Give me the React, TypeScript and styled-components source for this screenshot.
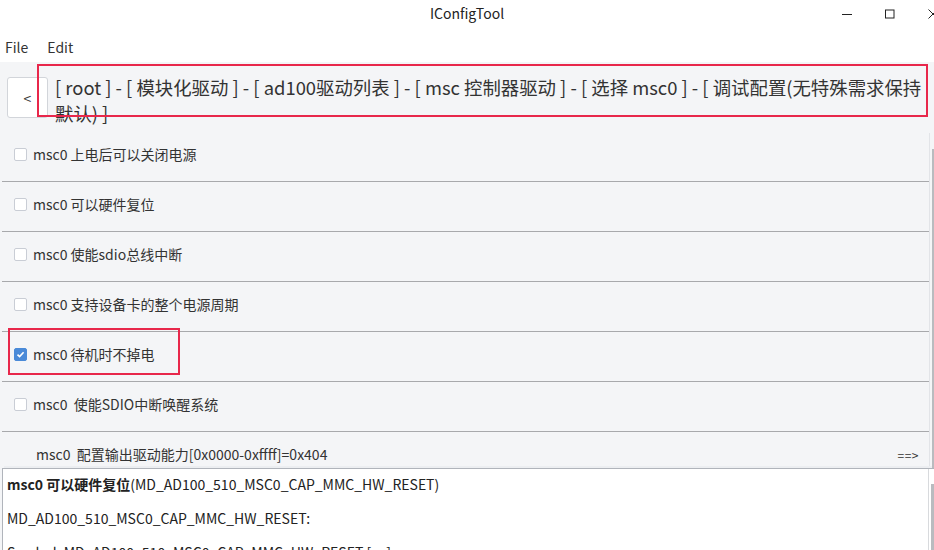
import styled, { createGlobalStyle } from "styled-components";

const GlobalStyle = createGlobalStyle`
	html, body {
		margin: 0;
		padding: 0;
		overflow: hidden;
		background: #ffffff;
	}
	body {
		font-family: "Noto Sans CJK SC", "Noto Sans", sans-serif;
		color: #2b2b2b;
	}
`;

const Window = styled.div`
	position: relative;
	width: 934px;
	height: 550px;
	overflow: hidden;
	display: flex;
	flex-direction: column;
	background: #f4f5f7;
`;

const TitleBar = styled.div`
	height: 30px;
	flex: none;
	display: grid;
	grid-template-columns: 1fr auto 1fr;
	align-items: center;
	background: #ffffff;
`;

const Title = styled.div`
	grid-column: 2;
	font-size: 14px;
	color: #222;
	padding-bottom: 4px;
`;

const Controls = styled.div`
	grid-column: 3;
	justify-self: end;
	display: flex;
	align-items: center;
	gap: 33px;
	margin-right: -4px;
	padding-bottom: 3px;
	color: #222;
`;

const ControlIcon = styled.svg`
	width: 10px;
	height: 10px;
	display: block;
`;

const MenuBar = styled.div`
	height: 32px;
	flex: none;
	display: flex;
	align-items: center;
	gap: 19px;
	padding: 2px 0 0 5px;
	box-sizing: border-box;
	background: #ffffff;
`;

const MenuItem = styled.span`
	font-size: 14px;
	color: #333;
`;

const CrumbBar = styled.div`
	height: 70px;
	flex: none;
	display: flex;
	align-items: flex-start;
	gap: 7px;
	padding: 12px 0 0 7px;
	box-sizing: border-box;
`;

const BackButton = styled.button`
	width: 41px;
	height: 41px;
	margin-top: 3px;
	flex: none;
	background: #ffffff;
	border: 1px solid #d2d5da;
	border-radius: 3px;
	font-family: inherit;
	font-size: 14px;
	color: #333;
	padding: 0;
`;

const Crumbs = styled.div`
	width: 870px;
	flex: none;
	font-size: 18.4px;
	line-height: 26px;
	color: #333;
`;

const ListWrap = styled.div`
	display: flex;
	height: 336px;
	flex: none;
`;

const List = styled.div`
	width: 927px;
	margin-left: 2px;
	display: flex;
	flex-direction: column;
`;

const Row = styled.div<{ $last?: boolean }>`
	height: ${({ $last }) => ($last ? "36px" : "50px")};
	flex: none;
	border-bottom: ${({ $last }) => ($last ? "none" : "1px solid #a8a9ac")};
	display: flex;
	align-items: center;
	padding: ${({ $last }) => ($last ? "8px 10px 0 34px" : "0 0 5px 12px")};
	box-sizing: border-box;
	font-size: 14px;
	color: #333;
	white-space: pre;
`;

const Check = styled.span<{ $on?: boolean }>`
	width: 11px;
	height: 11px;
	margin-right: 6px;
	flex: none;
	border: 1px solid ${({ $on }) => ($on ? "#4a8ad8" : "#c9cdd5")};
	border-radius: 2px;
	background: ${({ $on }) => ($on ? "#4a8ad8" : "#ffffff")};
	display: flex;
	align-items: center;
	justify-content: center;
`;

const Arrow = styled.span`
	margin-left: auto;
	font-size: 12px;
	color: #333;
	letter-spacing: 0.5px;
`;

const ListScroll = styled.div`
	width: 5px;
	margin-top: 1px;
	border-left: 1px solid #e2e4e8;
	display: flex;
	flex-direction: column;
	padding-top: 16px;
	box-sizing: border-box;
`;

const Thumb = styled.div`
	margin-left: 2px;
	width: 3px;
	flex: 1;
	background: #b9bbbf;
`;

const Detail = styled.div`
	flex: 1;
	display: flex;
	margin-left: 2px;
	border-top: 1px solid #b0b4bb;
	border-left: 1px solid #b0b4bb;
	background: #ffffff;
	box-shadow: 0 -4px 0 -2px #eceef1;
`;

const DetailBody = styled.div`
	width: 926px;
	padding: 4px 0 0 4px;
	font-size: 14px;
	color: #222;
`;

const DetailLine = styled.p`
	margin: 0 0 12px;
	line-height: 22px;
`;

const DetailScroll = styled.div`
	width: 5px;
	border-left: 1px solid #d8dadd;
	padding-top: 15px;
	display: flex;
	flex-direction: column;
`;

const Mark = styled.div<{ $x: number; $y: number; $w: number; $h: number }>`
	position: absolute;
	left: ${({ $x }) => $x}px;
	top: ${({ $y }) => $y}px;
	width: ${({ $w }) => $w}px;
	height: ${({ $h }) => $h}px;
	border: 2px solid #e8274b;
	box-sizing: border-box;
	pointer-events: none;
`;

const items = [
	{ label: "msc0 上电后可以关闭电源", on: false },
	{ label: "msc0 可以硬件复位", on: false },
	{ label: "msc0 使能sdio总线中断", on: false },
	{ label: "msc0 支持设备卡的整个电源周期", on: false },
	{ label: "msc0 待机时不掉电", on: true },
	{ label: "msc0  使能SDIO中断唤醒系统", on: false },
];

export default function App() {
	return (
		<>
			<GlobalStyle />
			<Window>
				<TitleBar>
					<Title>IConfigTool</Title>
					<Controls>
						<ControlIcon viewBox="0 0 10 10">
							<line x1="0" y1="5.5" x2="10" y2="5.5" stroke="#222" strokeWidth="1" />
						</ControlIcon>
						<ControlIcon viewBox="0 0 10 10">
							<rect x="0.5" y="1" width="8.5" height="8" fill="none" stroke="#222" strokeWidth="1" />
						</ControlIcon>
						<ControlIcon viewBox="0 0 10 10">
							<path d="M0.5 0.5 L9.5 9.5 M9.5 0.5 L0.5 9.5" stroke="#222" strokeWidth="1" />
						</ControlIcon>
					</Controls>
				</TitleBar>
				<MenuBar>
					<MenuItem>File</MenuItem>
					<MenuItem>Edit</MenuItem>
				</MenuBar>
				<CrumbBar>
					<BackButton>&lt;</BackButton>
					<Crumbs>
						[ root ] - [ 模块化驱动 ] - [ ad100驱动列表 ] - [ msc 控制器驱动 ] - [ 选择 msc0 ] - [ 调试配置(无特殊需求保持默认) ]
					</Crumbs>
				</CrumbBar>
				<ListWrap>
					<List>
						{items.map((item) => (
							<Row key={item.label}>
								<Check $on={item.on}>
									{item.on && (
										<svg width="9" height="9" viewBox="0 0 9 9">
											<path d="M1.5 4.6 L3.6 6.6 L7.6 2.2" fill="none" stroke="#fff" strokeWidth="1.6" />
										</svg>
									)}
								</Check>
								{item.label}
							</Row>
						))}
						<Row $last>
							msc0  配置输出驱动能力[0x0000-0xffff]=0x404
							<Arrow>==&gt;</Arrow>
						</Row>
					</List>
					<ListScroll>
						<Thumb />
					</ListScroll>
				</ListWrap>
				<Detail>
					<DetailBody>
						<DetailLine>
							<b>msc0 可以硬件复位</b>(MD_AD100_510_MSC0_CAP_MMC_HW_RESET)
						</DetailLine>
						<DetailLine>MD_AD100_510_MSC0_CAP_MMC_HW_RESET:</DetailLine>
						<DetailLine>Symbol: MD_AD100_510_MSC0_CAP_MMC_HW_RESET [=y]</DetailLine>
					</DetailBody>
					<DetailScroll>
						<Thumb />
					</DetailScroll>
				</Detail>
				<Mark $x={37} $y={64} $w={891} $h={53} />
				<Mark $x={8} $y={328} $w={172} $h={47} />
			</Window>
		</>
	);
}
